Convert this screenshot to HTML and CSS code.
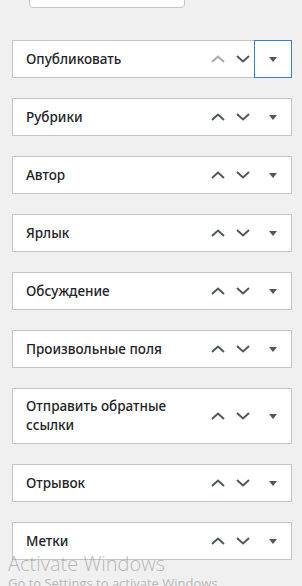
FILE: index.html
```html
<!DOCTYPE html>
<html lang="ru">
<head>
    <meta charset="UTF-8">
    <meta name="viewport" content="width=device-width, initial-scale=1.0">
    <title>Боковая панель записи</title>
    <link rel="stylesheet" href="styles.css">
</head>
<body>
    <div class="sidebar">
        <div class="search-box"></div>

        <!-- Metaboxes -->
        <div class="postbox">
            <h2 class="hndle">Опубликовать</h2>
            <div class="handle-actions">
                <button class="handle-btn is-disabled"><svg width="14" height="8" viewBox="0 0 14 8"><polyline points="1,7 7,1.5 13,7"/></svg></button>
                <button class="handle-btn"><svg width="14" height="8" viewBox="0 0 14 8"><polyline points="1,1 7,6.5 13,1"/></svg></button>
                <button class="toggle-btn is-focused"><span class="triangle"></span></button>
            </div>
        </div>

        <div class="postbox">
            <h2 class="hndle">Рубрики</h2>
            <div class="handle-actions">
                <button class="handle-btn"><svg width="14" height="8" viewBox="0 0 14 8"><polyline points="1,7 7,1.5 13,7"/></svg></button>
                <button class="handle-btn"><svg width="14" height="8" viewBox="0 0 14 8"><polyline points="1,1 7,6.5 13,1"/></svg></button>
                <button class="toggle-btn"><span class="triangle"></span></button>
            </div>
        </div>

        <div class="postbox">
            <h2 class="hndle">Автор</h2>
            <div class="handle-actions">
                <button class="handle-btn"><svg width="14" height="8" viewBox="0 0 14 8"><polyline points="1,7 7,1.5 13,7"/></svg></button>
                <button class="handle-btn"><svg width="14" height="8" viewBox="0 0 14 8"><polyline points="1,1 7,6.5 13,1"/></svg></button>
                <button class="toggle-btn"><span class="triangle"></span></button>
            </div>
        </div>

        <div class="postbox">
            <h2 class="hndle">Ярлык</h2>
            <div class="handle-actions">
                <button class="handle-btn"><svg width="14" height="8" viewBox="0 0 14 8"><polyline points="1,7 7,1.5 13,7"/></svg></button>
                <button class="handle-btn"><svg width="14" height="8" viewBox="0 0 14 8"><polyline points="1,1 7,6.5 13,1"/></svg></button>
                <button class="toggle-btn"><span class="triangle"></span></button>
            </div>
        </div>

        <div class="postbox">
            <h2 class="hndle">Обсуждение</h2>
            <div class="handle-actions">
                <button class="handle-btn"><svg width="14" height="8" viewBox="0 0 14 8"><polyline points="1,7 7,1.5 13,7"/></svg></button>
                <button class="handle-btn"><svg width="14" height="8" viewBox="0 0 14 8"><polyline points="1,1 7,6.5 13,1"/></svg></button>
                <button class="toggle-btn"><span class="triangle"></span></button>
            </div>
        </div>

        <div class="postbox">
            <h2 class="hndle">Произвольные поля</h2>
            <div class="handle-actions">
                <button class="handle-btn"><svg width="14" height="8" viewBox="0 0 14 8"><polyline points="1,7 7,1.5 13,7"/></svg></button>
                <button class="handle-btn"><svg width="14" height="8" viewBox="0 0 14 8"><polyline points="1,1 7,6.5 13,1"/></svg></button>
                <button class="toggle-btn"><span class="triangle"></span></button>
            </div>
        </div>

        <div class="postbox">
            <h2 class="hndle">Отправить обратные ссылки</h2>
            <div class="handle-actions">
                <button class="handle-btn"><svg width="14" height="8" viewBox="0 0 14 8"><polyline points="1,7 7,1.5 13,7"/></svg></button>
                <button class="handle-btn"><svg width="14" height="8" viewBox="0 0 14 8"><polyline points="1,1 7,6.5 13,1"/></svg></button>
                <button class="toggle-btn"><span class="triangle"></span></button>
            </div>
        </div>

        <div class="postbox">
            <h2 class="hndle">Отрывок</h2>
            <div class="handle-actions">
                <button class="handle-btn"><svg width="14" height="8" viewBox="0 0 14 8"><polyline points="1,7 7,1.5 13,7"/></svg></button>
                <button class="handle-btn"><svg width="14" height="8" viewBox="0 0 14 8"><polyline points="1,1 7,6.5 13,1"/></svg></button>
                <button class="toggle-btn"><span class="triangle"></span></button>
            </div>
        </div>

        <div class="postbox">
            <h2 class="hndle">Метки</h2>
            <div class="handle-actions">
                <button class="handle-btn"><svg width="14" height="8" viewBox="0 0 14 8"><polyline points="1,7 7,1.5 13,7"/></svg></button>
                <button class="handle-btn"><svg width="14" height="8" viewBox="0 0 14 8"><polyline points="1,1 7,6.5 13,1"/></svg></button>
                <button class="toggle-btn"><span class="triangle"></span></button>
            </div>
        </div>
    </div>

    <!-- Windows watermark -->
    <div class="watermark">
        <div class="watermark-title">Activate Windows</div>
        <div class="watermark-text">Go to Settings to activate Windows.</div>
    </div>
</body>
</html>
```

FILE: styles.css
```css
body {
    background: #f0f0f1;
    color: #1d2327;
    font-family: 'Noto Sans', 'Open Sans', sans-serif;
    margin: 0;
    padding: 0;
    overflow: hidden;
}

.sidebar {
    padding: 0 10px 0 12px;
}

.search-box {
    width: 154px;
    height: 30px;
    margin: -24px 0 0 17px;
    background: #fff;
    border: 1px solid #c8c8c8;
    border-radius: 4px;
}

/* Metabox */
.postbox {
    display: flex;
    align-items: center;
    background: #fff;
    border: 1px solid #c3c4c7;
    margin-top: 20px;
    min-height: 36px;
}

.search-box + .postbox {
    margin-top: 32px;
}

.hndle {
    flex: 1;
    margin: 0;
    padding: 8px 0 8px 13px;
    font-size: 13.5px;
    font-weight: 500;
    line-height: 19px;
    color: #1d2327;
}

.handle-actions {
    display: flex;
    align-self: stretch;
    flex-shrink: 0;
}

.handle-btn,
.toggle-btn {
    display: flex;
    align-items: center;
    justify-content: center;
    background: none;
    border: 0;
    padding: 0;
    margin: 0;
    cursor: pointer;
}

.handle-btn {
    width: 25px;
}

.handle-btn svg {
    fill: none;
    stroke: #50575e;
    stroke-width: 2;
}

.handle-btn.is-disabled svg {
    stroke: #a7aaad;
}

.toggle-btn {
    width: 36px;
}

.toggle-btn.is-focused {
    box-shadow: 0 0 0 1px #3582c4;
}

.triangle {
    width: 0;
    height: 0;
    border-left: 4px solid transparent;
    border-right: 4px solid transparent;
    border-top: 5px solid #50575e;
}

/* Watermark overlay */
.watermark {
    position: absolute;
    left: 8px;
    top: 551px;
    color: rgba(130, 130, 130, 0.55);
    font-family: 'Open Sans', sans-serif;
    pointer-events: none;
}

.watermark-title {
    font-size: 20px;
    font-weight: 300;
    line-height: 26px;
}

.watermark-text {
    font-size: 13px;
    line-height: 18px;
    margin-top: -3px;
}
```
